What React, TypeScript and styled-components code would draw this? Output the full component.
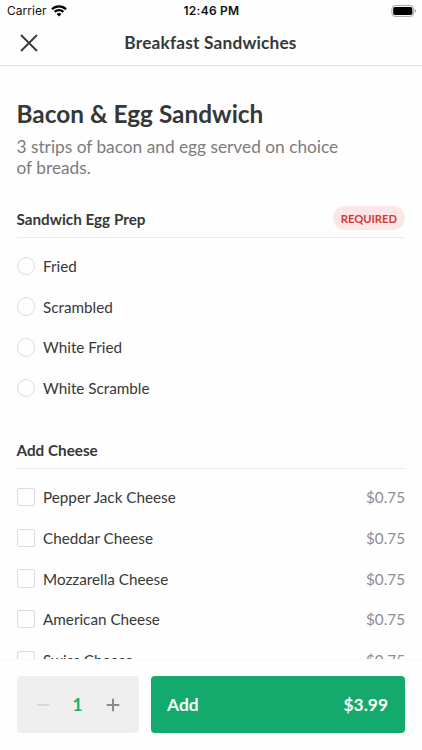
import React from 'react';
import styled, { createGlobalStyle } from 'styled-components';

const GlobalStyle = createGlobalStyle`
  *, *::before, *::after { box-sizing: border-box; }
  body { margin: 0; background: #fefefe; font-family: Lato, sans-serif; color: #363837; }
  button { font: inherit; border: 0; padding: 0; background: none; color: inherit; }
`;

const Screen = styled.div`
  width: 422px;
  height: 750px;
  display: flex;
  flex-direction: column;
  overflow: hidden;
  background: #fefefe;
`;

const StatusBar = styled.div`
  height: 22px;
  flex: none;
  display: grid;
  grid-template-columns: 1fr auto 1fr;
  align-items: center;
  padding: 0 5px 0 6px;
  font-family: Inter, sans-serif;
  font-size: 12px;
  line-height: 22px;
  color: #111;
`;

const Carrier = styled.div`
  display: flex;
  align-items: center;
  gap: 4px;
  padding-left: 1px;
  letter-spacing: 0.05px;
`;

const Clock = styled.div`
  font-weight: 600;
  letter-spacing: 0.25px;
`;

const BatterySlot = styled.div`
  display: flex;
  justify-content: flex-end;
`;

const NavBar = styled.header`
  height: 44px;
  flex: none;
  display: grid;
  grid-template-columns: 48px 1fr 48px;
  align-items: center;
  padding-right: 1px;
  border-bottom: 1px solid #e2e2e2;
`;

const CloseButton = styled.button`
  display: flex;
  padding: 0 0 1px 20px;
`;

const NavTitle = styled.h1`
  margin: 0;
  text-align: center;
  font-size: 17.3px;
  letter-spacing: 0.18px;
  font-weight: 700;
  line-height: 41px;
  padding-bottom: 2px;
`;

const Content = styled.main`
  flex: 1;
  min-height: 0;
  overflow: hidden;
  padding: 33px 17px 0 16.5px;
`;

const ItemName = styled.h2`
  margin: 0;
  font-size: 24.4px;
  line-height: 30px;
  font-weight: 700;
`;

const Description = styled.p`
  margin: 7px 0 0;
  width: 335px;
  font-size: 17.3px;
  line-height: 21px;
  color: #7b7c7c;
`;

const Section = styled.section<{ $gap: number }>`
  margin-top: ${({ $gap }) => $gap}px;
`;

const SectionHead = styled.div`
  height: 36px;
  display: flex;
  align-items: center;
  justify-content: space-between;
  border-bottom: 1px solid #ececec;
  margin-bottom: 8.2px;
`;

const SectionTitle = styled.h3`
  margin: 0;
  font-size: 15.25px;
  line-height: 20px;
  font-weight: 700;
`;

const Badge = styled.span`
  height: 24px;
  margin-bottom: 2px;
  padding: 0 8px;
  border-radius: 12px;
  background: #fde6e6;
  color: #cb3b37;
  font-size: 11.2px;
  font-weight: 700;
  line-height: 25px;
`;

const Option = styled.div`
  height: 40.7px;
  display: flex;
  align-items: center;
  font-size: 15.25px;
  line-height: 20px;
`;

const Marker = styled.span<{ $round?: boolean }>`
  width: 18.5px;
  height: 18.5px;
  flex: none;
  margin-right: 8px;
  border: 1px solid #dcdcdc;
  border-radius: ${({ $round }) => ($round ? '50%' : '2px')};
`;

const Price = styled.span`
  margin-left: auto;
  color: #8d8e8e;
`;

const Footer = styled.footer`
  height: 91px;
  flex: none;
  display: flex;
  gap: 12px;
  padding: 16.4px 17px 17px 16.6px;
  border-top: 1px solid #f8f8f8;
`;

const Stepper = styled.div`
  width: 122px;
  display: flex;
  align-items: center;
  justify-content: space-between;
  padding: 0 19px;
  border-radius: 4px;
  background: #efefef;
`;

const StepButton = styled.button<{ $tone: string }>`
  display: flex;
  color: ${({ $tone }) => $tone};
`;

const Quantity = styled.span`
  font-size: 17.3px;
  font-weight: 700;
  color: #20ad70;
`;

const AddButton = styled.button`
  flex: 1;
  display: flex;
  align-items: center;
  justify-content: space-between;
  && { padding: 0 17px 0 16.5px; }
  border-radius: 4px;
  && { background: #15aa6d; color: #f5fffa; font-size: 17.4px; font-weight: 700; }
`;

const preps = ['Fried', 'Scrambled', 'White Fried', 'White Scramble'];
const cheeses = ['Pepper Jack Cheese', 'Cheddar Cheese', 'Mozzarella Cheese', 'American Cheese', 'Swiss Cheese'];

const WifiIcon = () => (
  <svg width="16" height="12" viewBox="0 0 16 12" fill="none" stroke="#000" strokeWidth="2.3">
    <path d="M1 4.2C4.9.4 11.1.4 15 4.2M3.6 6.9c2.5-2.4 6.3-2.4 8.8 0" />
    <path d="M5.6 8.9c1.4-1.2 3.4-1.2 4.8 0L8 11.4Z" fill="#000" stroke="none" />
  </svg>
);

const BatteryIcon = () => (
  <svg width="26" height="12" viewBox="0 0 26 12">
    <rect x=".9" y=".6" width="21.8" height="10.8" rx="3" fill="none" stroke="#a4a4a4" />
    <rect x="2.2" y="2.1" width="19.2" height="7.8" rx="1.7" fill="#000" />
    <path d="M23.8 4.1c1.6.7 1.6 3.1 0 3.8Z" fill="#999" />
  </svg>
);

const CloseIcon = () => (
  <svg width="18" height="18" viewBox="0 0 18 18" fill="none" stroke="#363837" strokeWidth="1.8">
    <path d="m1 1 16 16M17 1 1 17" />
  </svg>
);

const StepIcon = ({ plus }: { plus?: boolean }) => (
  <svg width="14" height="14" viewBox="0 0 14 14" fill="none" stroke="currentColor" strokeWidth="2">
    <path d={plus ? 'M.7 7h12.6M7 .7v12.6' : 'M.7 7h12.6'} />
  </svg>
);

export default function App() {
  return (
    <>
      <GlobalStyle />
      <Screen>
        <StatusBar>
          <Carrier>Carrier<WifiIcon /></Carrier>
          <Clock>12:46 PM</Clock>
          <BatterySlot><BatteryIcon /></BatterySlot>
        </StatusBar>
        <NavBar>
          <CloseButton aria-label="Close"><CloseIcon /></CloseButton>
          <NavTitle>Breakfast Sandwiches</NavTitle>
        </NavBar>
        <Content>
          <ItemName>Bacon &amp; Egg Sandwich</ItemName>
          <Description>3 strips of bacon and egg served on choice of breads.</Description>
          <Section $gap={23.5}>
            <SectionHead>
              <SectionTitle>Sandwich Egg Prep</SectionTitle>
              <Badge>REQUIRED</Badge>
            </SectionHead>
            {preps.map((name) => (
              <Option key={name}><Marker $round />{name}</Option>
            ))}
          </Section>
          <Section $gap={24.2}>
            <SectionHead>
              <SectionTitle>Add Cheese</SectionTitle>
            </SectionHead>
            {cheeses.map((name) => (
              <Option key={name}><Marker />{name}<Price>$0.75</Price></Option>
            ))}
          </Section>
        </Content>
        <Footer>
          <Stepper>
            <StepButton $tone="#d8d8d8" aria-label="Decrease quantity"><StepIcon /></StepButton>
            <Quantity>1</Quantity>
            <StepButton $tone="#8b8b8b" aria-label="Increase quantity"><StepIcon plus /></StepButton>
          </Stepper>
          <AddButton><span>Add</span><span>$3.99</span></AddButton>
        </Footer>
      </Screen>
    </>
  );
}
